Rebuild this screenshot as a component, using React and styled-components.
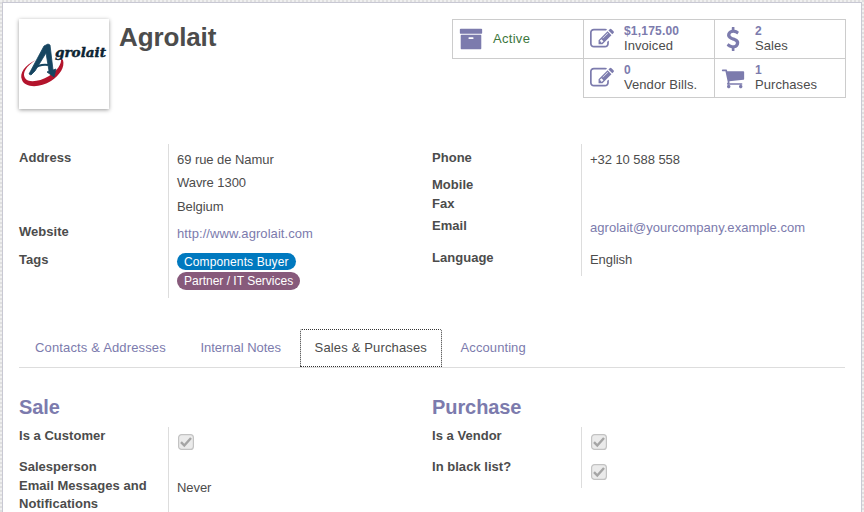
import React from "react";
import styled, { createGlobalStyle } from "styled-components";

const Global = createGlobalStyle`
  * { box-sizing: border-box; }
  html, body { margin: 0; height: 512px; overflow: hidden; }
  body {
    font: 13px/18px "Liberation Sans", Arial, sans-serif;
    color: #4c4c4c;
    background: repeating-conic-gradient(#dfdfdf 0 25%, #f0f0f0 0 50%) 0 0 / 4px 4px;
  }
`;

const Page = styled.div`
  height: 512px;
  padding: 2px 2px 0;
  overflow: hidden;
`;
const Sheet = styled.main`
  height: 530px;
  padding: 16px 16px 0;
  background: #fff;
  border: 1px solid #c8c8d3;
`;
const Header = styled.header`
  display: flex;
  align-items: flex-start;
  height: 125px;
`;
const Avatar = styled.div`
  width: 90px;
  height: 90px;
  background: #fff;
  box-shadow: 0 1px 4px rgba(0, 0, 0, 0.4);
  svg { display: block; }
`;
const Title = styled.h1`
  margin: 0 0 0 10px;
  font-size: 26px;
  line-height: 36px;
  letter-spacing: -0.12px;
`;
const Stats = styled.div`
  display: grid;
  grid-template-columns: 131px 131px 132px;
  grid-auto-rows: 39px;
  margin-left: auto;
  margin-right: -1px;
`;
const Stat = styled.div`
  display: flex;
  align-items: center;
  width: 132px;
  height: 40px;
  border: 1px solid #ccc;
  grid-column: ${(p) => p.$col};
  grid-row: ${(p) => p.$row};
`;
const StatIcon = styled.svg`
  width: 24px;
  height: 24px;
  margin: 0 10px 0 6px;
  flex: none;
  fill: #7c7bad;
`;
const StatText = styled.div`
  line-height: 15px;
  white-space: nowrap;
`;
const StatValue = styled.div`
  font-size: 12px;
  font-weight: bold;
  letter-spacing: 0.2px;
  color: #7c7bad;
`;
const StatLabel = styled.div`
  margin-top: -1px;
  padding-bottom: 1px;
  letter-spacing: 0.07px;
`;
const ActiveLabel = styled.span`
  color: #3c763d;
  letter-spacing: 0.3px;
`;
const Columns = styled.div`
  display: grid;
  grid-template-columns: 413px 413px;
  align-items: start;
  height: ${(p) => p.$height};
`;
const Row = styled.div`
  display: grid;
  grid-template-columns: 149px 1fr;
  height: ${(p) => p.$h}px;
`;
const Label = styled.div`
  padding-top: ${(p) => p.$top}px;
  font-weight: bold;
  letter-spacing: 0.03px;
`;
const Value = styled.div`
  padding: ${(p) => p.$top}px 0 0 8px;
  border-left: 1px solid #ddd;
  line-height: ${(p) => p.$line || 18}px;
  letter-spacing: -0.06px;
  white-space: nowrap;
`;
const Link = styled.a`
  color: #7c7bad;
  letter-spacing: ${(p) => p.$spacing || "0"};
`;
const Tags = styled.div`
  display: flex;
  flex-direction: column;
  align-items: flex-start;
  gap: 2px;
`;
const Tag = styled.span`
  height: ${(p) => p.$height || 17}px;
  padding: 0 7px;
  border-radius: 9px;
  font-size: 12px;
  line-height: 18px;
  letter-spacing: ${(p) => p.$spacing || "0"};
  color: #fff;
  background: ${(p) => p.$color};
`;
const Tabs = styled.nav`
  display: flex;
  height: 40px;
  border-bottom: 1px solid #ddd;
`;
const Tab = styled.div`
  height: 39px;
  padding: 11px 16px 0;
  margin-right: 2.6px;
  color: #7c7bad;
  letter-spacing: ${(p) => p.$spacing || "0.15px"};
  white-space: nowrap;
`;
const ActiveTab = styled(Tab)`
  width: 142px;
  height: 38px;
  margin: 1px 3px 0 0;
  padding: 9px 0 0 14px;
  color: #4c4c4c;
  background: #fff;
  border: 1px dotted #333;
  border-radius: 2px 2px 0 0;
`;
const Heading = styled.h2`
  margin: 0;
  height: 59px;
  padding-top: 26px;
  font-size: 20px;
  line-height: 26px;
  letter-spacing: -0.08px;
  color: #7c7bad;
`;
const Check = styled.svg`
  display: block;
  width: 16px;
  height: 16px;
  margin-left: 1px;
`;

const ICONS = {
  archive:
    "M1088 832q0-26-19-45t-45-19h-256q-26 0-45 19t-19 45 19 45 45 19h256q26 0 45-19t19-45zm576-192v960q0 26-19 45t-45 19h-1408q-26 0-45-19t-19-45v-960q0-26 19-45t45-19h1408q26 0 45 19t19 45zm64-448v256q0 26-19 45t-45 19h-1536q-26 0-45-19t-19-45v-256q0-26 19-45t45-19h1536q26 0 45 19t19 45z",
  edit:
    "M888 1184l116-116-152-152-116 116v56h96v96h56zm440-720q-16-16-33 1l-350 350q-17 17-1 33t33-1l350-350q17-17 1-33zm80 594v190q0 119-84.5 203.5t-203.5 84.5h-832q-119 0-203.5-84.5t-84.5-203.5v-832q0-119 84.5-203.5t203.5-84.5h832q63 0 117 25 15 7 18 23 3 17-9 29l-49 49q-14 14-32 8-23-6-45-6h-832q-66 0-113 47t-47 113v832q0 66 47 113t113 47h832q66 0 113-47t47-113v-126q0-13 9-22l64-64q15-15 35-7t20 29zm-96-738l288 288-672 672h-288v-288zm444 132l-92 92-288-288 92-92q28-28 68-28t68 28l152 152q28 28 28 68t-28 68z",
  dollar:
    "M1362 1185q0 153-99.5 263.5t-258.5 136.5v175q0 14-9 23t-23 9h-135q-13 0-22.5-9.5t-9.5-22.5v-175q-66-9-127.5-31t-101.5-44.5-74-48-46.5-37.5-17.5-18q-17-21-2-41l103-135q7-10 23-12 15-2 24 9l2 2q113 99 243 125 37 8 74 8 81 0 142.5-43t61.5-122q0-28-15-53t-33.5-42-58.5-37.5-66-32-80-32.5q-39-16-61.5-25t-61.5-26.5-62.5-31-56.5-35.5-53.5-42.5-43.5-49-35.5-58-21-66.5-8.5-78q0-138 98-242t255-134v-180q0-13 9.5-22.5t22.5-9.5h135q14 0 23 9t9 23v176q57 6 110.5 23t87 33.5 63.5 37.5 39 29 15 14q17 18 5 38l-81 146q-8 15-23 16-14 3-27-7-3-3-14.5-12t-39-26.5-58.5-32-74.5-26-85.5-11.5q-95 0-155 43t-60 111q0 26 8.5 48t29.5 41.5 39.5 33 56 31 60.5 27 70 27.5q53 20 81 31.5t76 35 75.5 42.5 62 50 53 63.5 31.5 76.5 13 94z",
  cart:
    "M704 1536q0 52-38 90t-90 38-90-38-38-90 38-90 90-38 90 38 38 90zm896 0q0 52-38 90t-90 38-90-38-38-90 38-90 90-38 90 38 38 90zm128-1088v512q0 24-16.5 42.5t-40.5 21.5l-1044 122q13 60 13 70 0 16-24 64h920q26 0 45 19t19 45-19 45-45 19h-1024q-26 0-45-19t-19-45q0-11 8-31.5t16-36 21.5-40 15.5-29.5l-177-823h-204q-26 0-45-19t-19-45 19-45 45-19h256q16 0 28.5 6.5t19.5 15.5 13 24.5 8 26 5.5 29.5 4.5 26h1201q26 0 45 19t19 45z",
};

const Icon = ({ name }) => (
  <StatIcon viewBox="0 0 1792 1792">
    <path d={ICONS[name]} />
  </StatIcon>
);

const STATS = [
  { icon: "edit", value: "$1,175.00", label: "Invoiced", col: 2, row: 1 },
  { icon: "dollar", value: "2", label: "Sales", col: 3, row: 1 },
  { icon: "edit", value: "0", label: "Vendor Bills.", col: 2, row: 2 },
  { icon: "cart", value: "1", label: "Purchases", col: 3, row: 2 },
];

const Field = ({ label, h, lt = 0, vt = 0, line, children }) => (
  <Row $h={h}>
    <Label $top={lt}>{label}</Label>
    <Value $top={vt} $line={line}>{children}</Value>
  </Row>
);

const CheckBox = () => (
  <Check viewBox="0 0 16 16">
    <rect x="0.6" y="0.6" width="14.8" height="14.8" rx="3" fill="#ebebeb" stroke="#c3c3c3" strokeWidth="1.2" />
    <path d="M3 8.2 6.3 11.6 13 4" fill="none" stroke="#a5a5a5" strokeWidth="2.4" />
  </Check>
);

const Logo = () => (
  <svg width="90" height="90" viewBox="0 0 90 90">
    <path d="M17 41C6 46 0 54 3 61c3 8 18 8 29 1 9-6 14-14 12-21l-2-2c1 6-4 13-12 18-10 6-21 7-24 2-3-5 1-12 11-18z" fill="#b3142c" />
    <path d="M10 55 25 27l4-2 2 1 3 25 3-1-2 8-7-5 2-1-3-18-11 18-4 4z" fill="#164560" stroke="#164560" strokeWidth="0.8" />
    <path d="M14 50c4-3 8-5 15-4" fill="none" stroke="#164560" strokeWidth="2" />
    <text x="36" y="38" textLength="51" lengthAdjust="spacingAndGlyphs" fontFamily="'DejaVu Serif', serif" fontSize="12.5" fontWeight="bold" fontStyle="italic" fill="#0c2433" stroke="#0c2433" strokeWidth="0.4">grolait</text>
  </svg>
);

export default function App() {
  return (
    <Page>
      <Global />
      <Sheet>
        <Header>
          <Avatar><Logo /></Avatar>
          <Title>Agrolait</Title>
          <Stats>
            <Stat $col={1} $row={1}>
              <Icon name="archive" />
              <ActiveLabel>Active</ActiveLabel>
            </Stat>
            {STATS.map((s) => (
              <Stat key={s.label} $col={s.col} $row={s.row}>
                <Icon name={s.icon} />
                <StatText>
                  <StatValue>{s.value}</StatValue>
                  <StatLabel>{s.label}</StatLabel>
                </StatText>
              </Stat>
            ))}
          </Stats>
        </Header>

        <Columns $height="184px">
          <section>
            <Field label="Address" h={78} lt={5} vt={4} line={23.4}>
              69 rue de Namur<br />Wavre 1300<br />Belgium
            </Field>
            <Field label="Website" h={28} lt={1} vt={3}>
              <Link $spacing="0.07px">http://www.agrolait.com</Link>
            </Field>
            <Field label="Tags" h={48} lt={1} vt={3}>
              <Tags>
                <Tag $color="#0079bf" $spacing="0.12px">Components Buyer</Tag>
                <Tag $color="#875a7b" $height={18}>Partner / IT Services</Tag>
              </Tags>
            </Field>
          </section>
          <section>
            <Field label="Phone" h={31} lt={5} vt={7}>+32 10 588 558</Field>
            <Field label="Mobile" h={19} lt={1} />
            <Field label="Fax" h={21} lt={1} />
            <Field label="Email" h={31} lt={2} vt={4}>
              <Link $spacing="0.04px">agrolait@yourcompany.example.com</Link>
            </Field>
            <Field label="Language" h={30} lt={3} vt={5}>English</Field>
          </section>
        </Columns>

        <Tabs>
          <Tab>Contacts &amp; Addresses</Tab>
          <Tab $spacing="-0.03px">Internal Notes</Tab>
          <ActiveTab>Sales &amp; Purchases</ActiveTab>
          <Tab $spacing="0.08px">Accounting</Tab>
        </Tabs>

        <Columns $height="160px">
          <section>
            <Heading>Sale</Heading>
            <Field label="Is a Customer" h={31} vt={7}><CheckBox /></Field>
            <Field label="Salesperson" h={19} />
            <Field label="Email Messages and Notifications" h={60} vt={2}>Never</Field>
          </section>
          <section>
            <Heading>Purchase</Heading>
            <Field label="Is a Vendor" h={31} vt={7}><CheckBox /></Field>
            <Field label="In black list?" h={30} vt={6}><CheckBox /></Field>
          </section>
        </Columns>
      </Sheet>
    </Page>
  );
}
